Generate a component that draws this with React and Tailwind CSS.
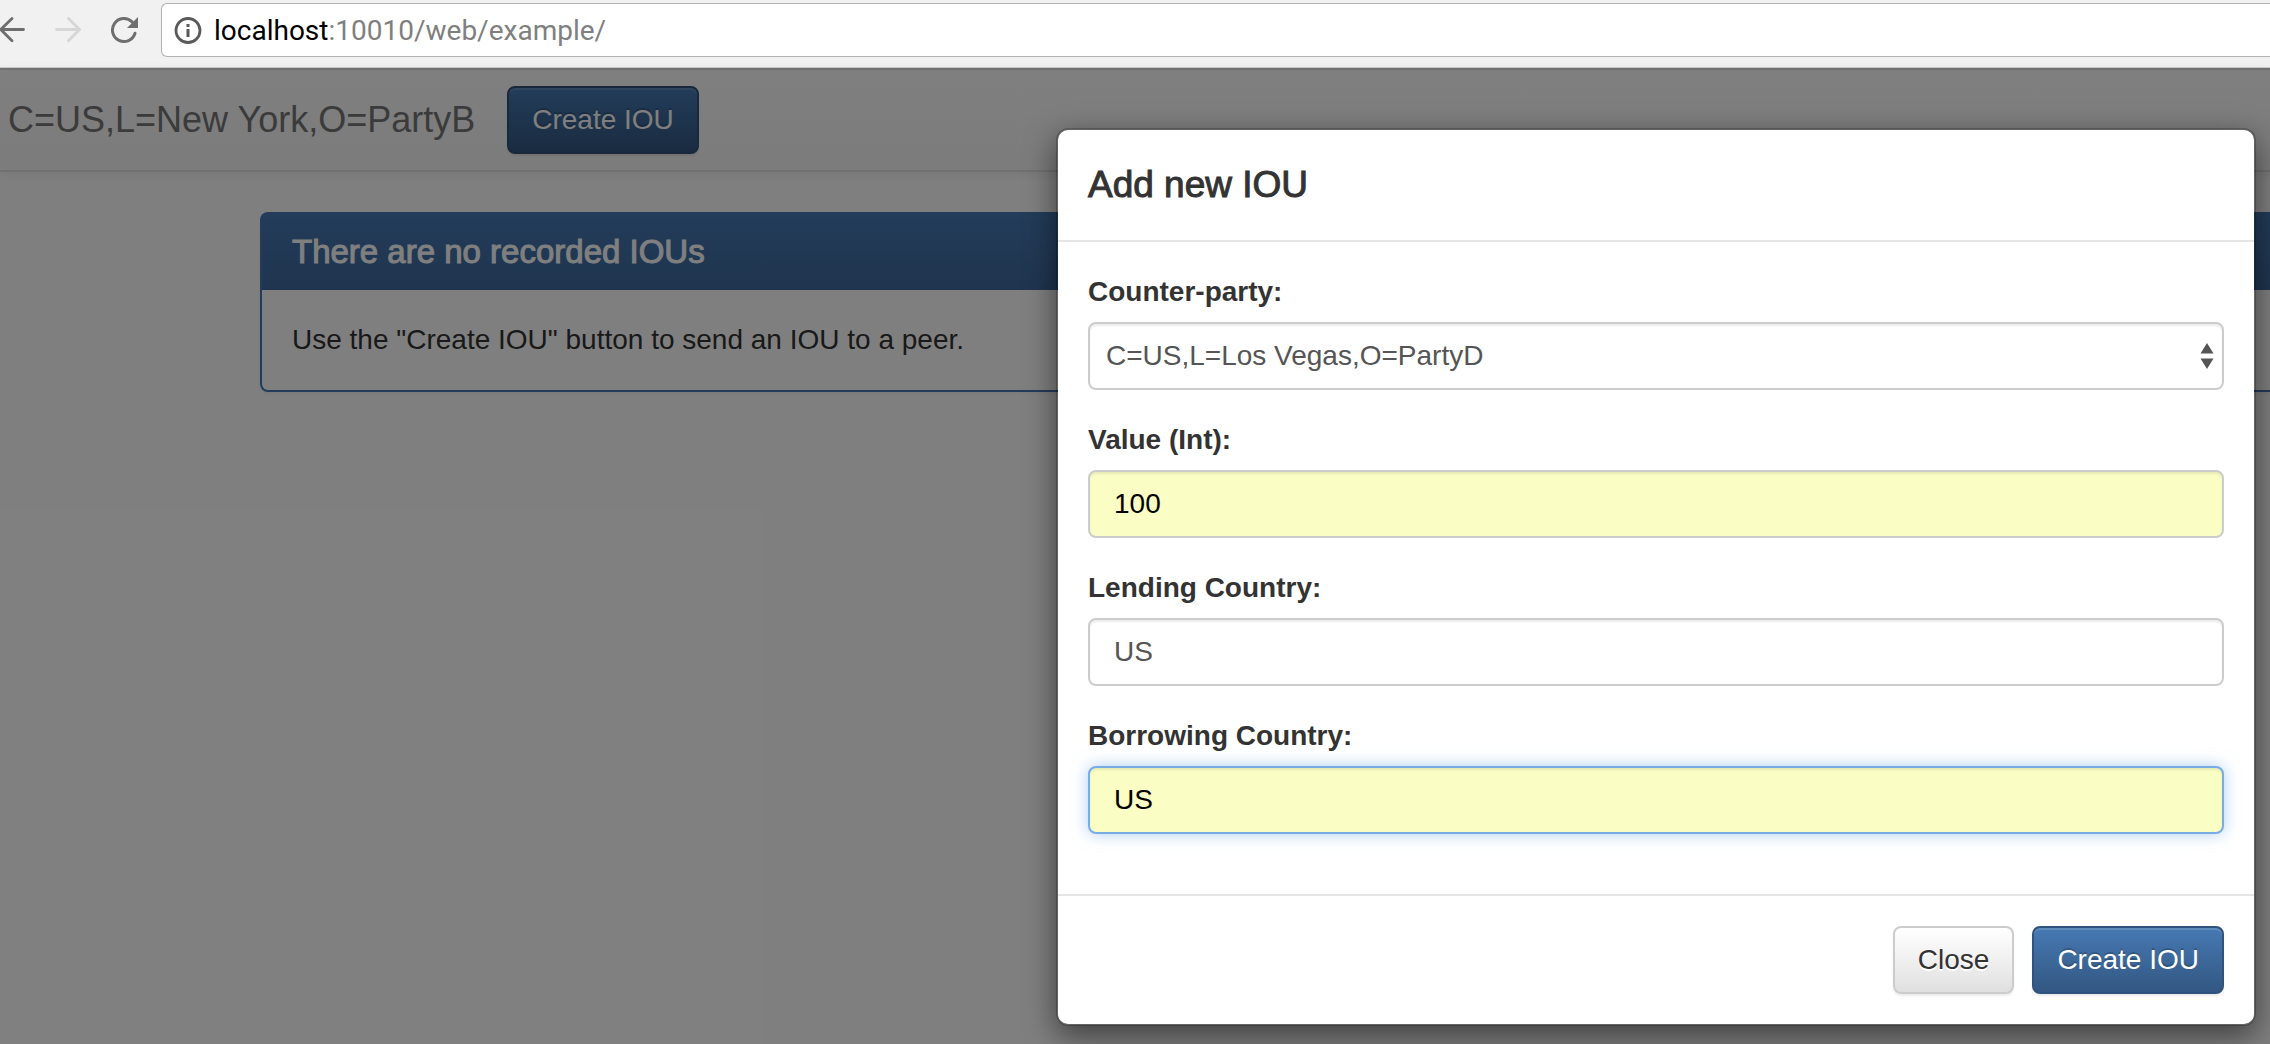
import { useState } from "react";

const PEERS = ["C=US,L=Los Vegas,O=PartyD"];

const FIELD =
  "h-17 w-full rounded-lg border-2 text-[28px] leading-10 outline-none";
const FIELD_PLAIN =
  "border-[#cccccc] shadow-[inset_0_2px_2px_rgba(0,0,0,0.075)]";

function BackIcon() {
  return (
    <svg width="26" height="26" viewBox="0 0 26 26" fill="none" stroke="#6e6e6e" strokeWidth="2.8" strokeLinecap="round" aria-hidden="true">
      <path d="M23.500 12.500H1.500M12 1.500L0.800 12.500L12 23.800" />
    </svg>
  );
}

function ForwardIcon() {
  return (
    <svg width="26" height="26" viewBox="0 0 26 26" fill="none" stroke="#d6d6d6" strokeWidth="2.8" strokeLinecap="round" aria-hidden="true">
      <path d="M1.500 12.500H23.500M13.500 1.500L24.500 12.500L13.500 23.800" />
    </svg>
  );
}

function ReloadIcon() {
  return (
    <svg width="28" height="28" viewBox="0 0 28 28" aria-hidden="true">
      <path
        d="M22.100 5.900A11.500 11.500 0 1 0 25 17.300"
        fill="none"
        stroke="#6e6e6e"
        strokeWidth="3"
        strokeLinecap="round"
      />
      <path d="M28 1V12H17Z" fill="#6e6e6e" />
    </svg>
  );
}

function InfoIcon() {
  return (
    <svg width="28" height="28" viewBox="0 0 28 28" aria-hidden="true">
      <circle cx="14" cy="14.500" r="12" fill="none" stroke="#5a5a5a" strokeWidth="2.800" />
      <rect x="12.500" y="8" width="3" height="3" fill="#5a5a5a" />
      <rect x="12.500" y="13" width="3" height="8" fill="#5a5a5a" />
    </svg>
  );
}

function BrowserBar() {
  return (
    <header className="flex h-17 border-b border-[#cbcbcb] bg-[#f1f1f1] pt-[3px]">
      <nav className="flex h-[54px] items-center gap-[29px] pr-[23px]">
        <button type="button" aria-label="Back">
          <BackIcon />
        </button>
        <button type="button" aria-label="Forward">
          <ForwardIcon />
        </button>
        <button type="button" aria-label="Reload">
          <ReloadIcon />
        </button>
      </nav>
      <div className="flex h-[54px] flex-1 items-center gap-3 rounded-l-md border border-r-0 border-[#b3b3b3] bg-white pl-3">
        <InfoIcon />
        <div role="textbox" aria-label="Address" className="pt-0.5 font-[Roboto,sans-serif] text-[28px] leading-8 text-[#7f7f7f]">
          <span className="text-black">localhost</span>:10010/web/example/
        </div>
      </div>
    </header>
  );
}

function PrimaryButton({ children }) {
  return (
    <button
      type="button"
      className="h-17 rounded-lg border-2 border-[#30537d] bg-linear-to-b from-[#4679b3] to-[#335782] px-[23px] text-[28px] leading-10 text-white shadow-[inset_0_2px_0_rgba(255,255,255,0.15),0_2px_2px_rgba(0,0,0,0.075)] [text-shadow:0_-2px_0_rgba(0,0,0,0.2)]"
    >
      {children}
    </button>
  );
}

function Field({ id, label, children }) {
  return (
    <div className="mb-[30px]">
      <label htmlFor={id} className="mb-2.5 block font-bold">
        {label}
      </label>
      {children}
    </div>
  );
}

function IouDialog() {
  const [peer, setPeer] = useState(PEERS[0]);
  const [value, setValue] = useState("100");
  const [lending, setLending] = useState("US");
  const [borrowing, setBorrowing] = useState("US");

  return (
    <section
      role="dialog"
      aria-labelledby="dialog-title"
      className="w-full max-w-[1200px] rounded-xl border-2 border-black/20 bg-white bg-clip-padding shadow-[0_10px_30px_rgba(0,0,0,0.5)]"
    >
      <div className="border-b-2 border-[#e5e5e5] p-[30px]">
        <h2 id="dialog-title" className="text-[37px] leading-[50px] [-webkit-text-stroke:1px_#333333]">
          Add new IOU
        </h2>
      </div>
      <form className="px-[30px] pt-[30px] pb-[30px]">
        <Field id="peer" label="Counter-party:">
          <div className="relative">
            <select
              id="peer"
              value={peer}
              onChange={(e) => setPeer(e.target.value)}
              className={`${FIELD} ${FIELD_PLAIN} appearance-none bg-white px-4 text-[#555555]`}
            >
              {PEERS.map((p) => (
                <option key={p}>{p}</option>
              ))}
            </select>
            <svg
              width="14"
              height="26"
              viewBox="0 0 14 26"
              fill="#555555"
              aria-hidden="true"
              className="pointer-events-none absolute top-[21px] right-2.5"
            >
              <path d="M7 0L13.500 10.500H0.500ZM7 26L0.500 15.500H13.500Z" />
            </svg>
          </div>
        </Field>
        <Field id="value" label="Value (Int):">
          <input
            id="value"
            value={value}
            onChange={(e) => setValue(e.target.value)}
            className={`${FIELD} ${FIELD_PLAIN} bg-[#fafdc4] px-6 text-black`}
          />
        </Field>
        <Field id="lending" label="Lending Country:">
          <input
            id="lending"
            value={lending}
            onChange={(e) => setLending(e.target.value)}
            className={`${FIELD} ${FIELD_PLAIN} bg-white px-6 text-[#555555]`}
          />
        </Field>
        <Field id="borrowing" label="Borrowing Country:">
          <input
            id="borrowing"
            value={borrowing}
            onChange={(e) => setBorrowing(e.target.value)}
            className={`${FIELD} border-[#76ade4] bg-[#fafdc4] px-6 text-black shadow-[inset_0_2px_2px_rgba(0,0,0,0.075),0_0_16px_rgba(118,173,228,0.6)]`}
          />
        </Field>
      </form>
      <div className="flex justify-end gap-[18px] border-t-2 border-[#e5e5e5] p-[30px]">
        <button
          type="button"
          className="h-17 rounded-lg border-2 border-[#cccccc] bg-linear-to-b from-white to-[#e0e0e0] px-[23px] text-[28px] leading-10 shadow-[0_2px_2px_rgba(0,0,0,0.075)] [text-shadow:0_2px_0_#ffffff]"
        >
          Close
        </button>
        <PrimaryButton>Create IOU</PrimaryButton>
      </div>
    </section>
  );
}

export default function App() {
  return (
    <div className="flex min-h-screen flex-col overflow-hidden bg-white font-['Liberation_Sans',Arial,sans-serif] text-[28px] leading-10 text-[#333333]">
      <BrowserBar />
      <div className="relative flex-1">
        <nav className="flex items-center gap-8 border-y-2 border-[#e0e0e0] bg-linear-to-b from-white to-[#f8f8f8] py-4 pl-2 shadow-[0_2px_10px_rgba(0,0,0,0.075)]">
          <span className="text-4xl leading-10 text-[#777777]">C=US,L=New York,O=PartyB</span>
          <PrimaryButton>Create IOU</PrimaryButton>
        </nav>
        <main className="mt-10 pl-65">
          <section className="rounded-l-lg border-2 border-r-0 border-[#4679b3] shadow-[0_2px_4px_rgba(0,0,0,0.05)]">
            <h3 className="bg-linear-to-b from-[#4679b3] to-[#3f6a9f] px-[30px] py-[18px] text-[33px] leading-10 text-white [-webkit-text-stroke:1px_#ffffff]">
              There are no recorded IOUs
            </h3>
            <p className="p-[30px]">Use the "Create IOU" button to send an IOU to a peer.</p>
          </section>
        </main>
        <div className="absolute inset-0 flex items-start justify-end bg-black/50 px-3.5 pt-15">
          <IouDialog />
        </div>
      </div>
    </div>
  );
}
